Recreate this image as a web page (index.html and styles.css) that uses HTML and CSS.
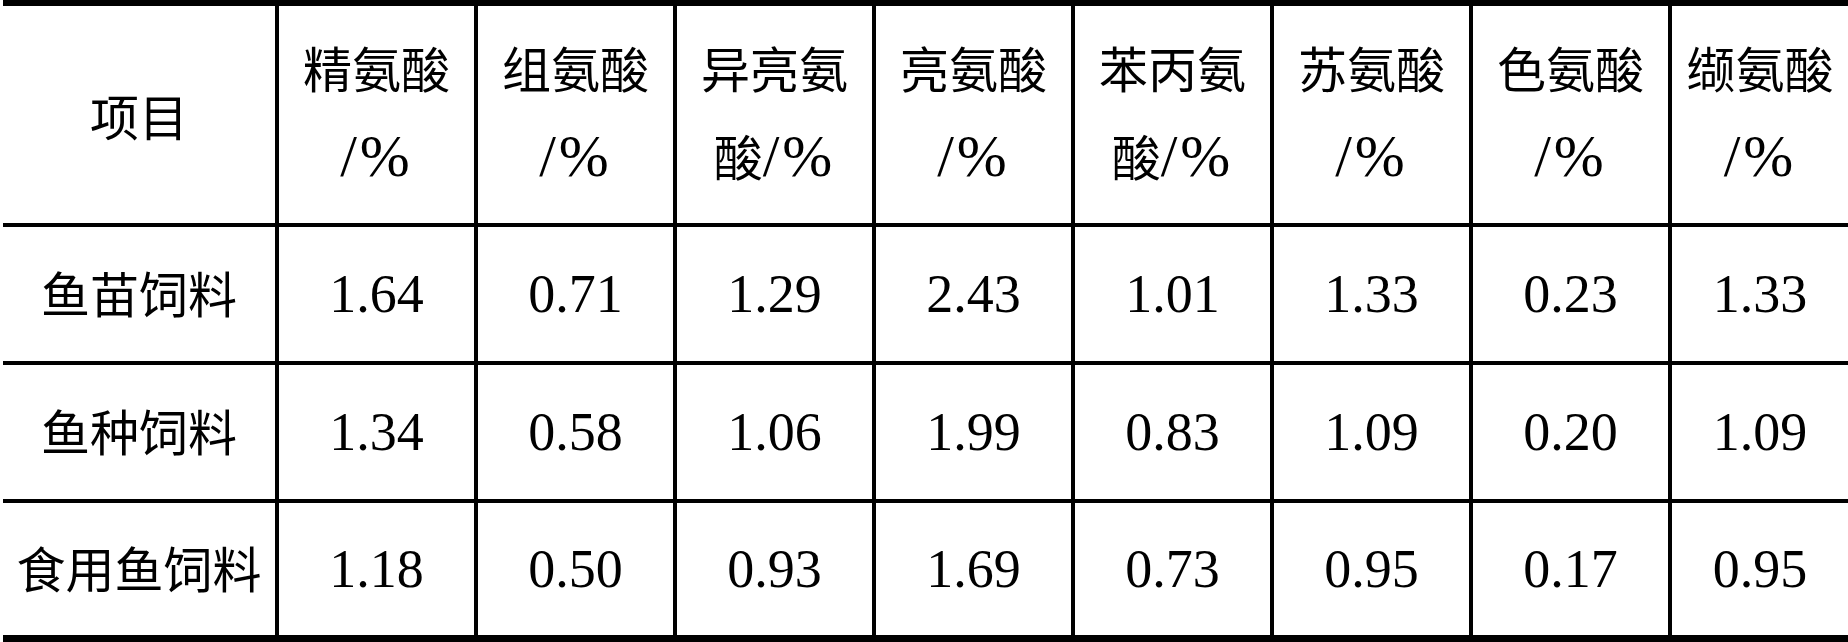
FILE: index.html
```html
<!DOCTYPE html>
<html lang="zh-CN">
<head>
<meta charset="utf-8">
<title>饲料氨基酸含量</title>
<link rel="stylesheet" href="styles.css">
</head>
<body>
<div class="table">
  <div class="cell head"><span>项目</span></div>
  <div class="cell head"><span class="stack">精氨酸<br><span class="pct">/%</span></span></div>
  <div class="cell head"><span class="stack">组氨酸<br><span class="pct">/%</span></span></div>
  <div class="cell head"><span class="stack">异亮氨<br>酸<span class="pct">/%</span></span></div>
  <div class="cell head"><span class="stack">亮氨酸<br><span class="pct">/%</span></span></div>
  <div class="cell head"><span class="stack">苯丙氨<br>酸<span class="pct">/%</span></span></div>
  <div class="cell head"><span class="stack">苏氨酸<br><span class="pct">/%</span></span></div>
  <div class="cell head"><span class="stack">色氨酸<br><span class="pct">/%</span></span></div>
  <div class="cell head"><span class="stack">缬氨酸<br><span class="pct">/%</span></span></div>

  <div class="cell label"><span>鱼苗饲料</span></div>
  <div class="cell num"><span>1.64</span></div>
  <div class="cell num"><span>0.71</span></div>
  <div class="cell num"><span>1.29</span></div>
  <div class="cell num"><span>2.43</span></div>
  <div class="cell num"><span>1.01</span></div>
  <div class="cell num"><span>1.33</span></div>
  <div class="cell num"><span>0.23</span></div>
  <div class="cell num"><span>1.33</span></div>

  <div class="cell label"><span>鱼种饲料</span></div>
  <div class="cell num"><span>1.34</span></div>
  <div class="cell num"><span>0.58</span></div>
  <div class="cell num"><span>1.06</span></div>
  <div class="cell num"><span>1.99</span></div>
  <div class="cell num"><span>0.83</span></div>
  <div class="cell num"><span>1.09</span></div>
  <div class="cell num"><span>0.20</span></div>
  <div class="cell num"><span>1.09</span></div>

  <div class="cell label"><span>食用鱼饲料</span></div>
  <div class="cell num"><span>1.18</span></div>
  <div class="cell num"><span>0.50</span></div>
  <div class="cell num"><span>0.93</span></div>
  <div class="cell num"><span>1.69</span></div>
  <div class="cell num"><span>0.73</span></div>
  <div class="cell num"><span>0.95</span></div>
  <div class="cell num"><span>0.17</span></div>
  <div class="cell num"><span>0.95</span></div>
</div>
</body>
</html>
```
FILE: styles.css
```css
html, body {
  margin: 0;
  padding: 0;
  background: #fff;
  overflow: hidden;
}

.table {
  display: grid;
  grid-template-columns: 272px repeat(7, 195px) 176px;
  grid-template-rows: 217px 134px 134px 132px;
  gap: 4px;
  background: #000;
  padding: 6px 0 7px 0;
  margin-left: 3px;
  width: max-content;
}

.cell {
  background: #fff;
  display: flex;
  align-items: center;
  justify-content: center;
  text-align: center;
  color: #000;
  font-family: "Noto Sans CJK SC", sans-serif;
  font-size: 49px;
  line-height: 1.2;
  white-space: nowrap;
}

.head {
  line-height: 80px;
}

.stack {
  display: block;
  line-height: 88px;
  margin-bottom: 6px;
}

.pct {
  font-family: "Liberation Serif", serif;
  font-size: 60px;
  letter-spacing: 3px;
}

.label {
  padding-bottom: 4px;
}

.num {
  font-family: "Liberation Serif", serif;
  font-size: 54px;
}
```
